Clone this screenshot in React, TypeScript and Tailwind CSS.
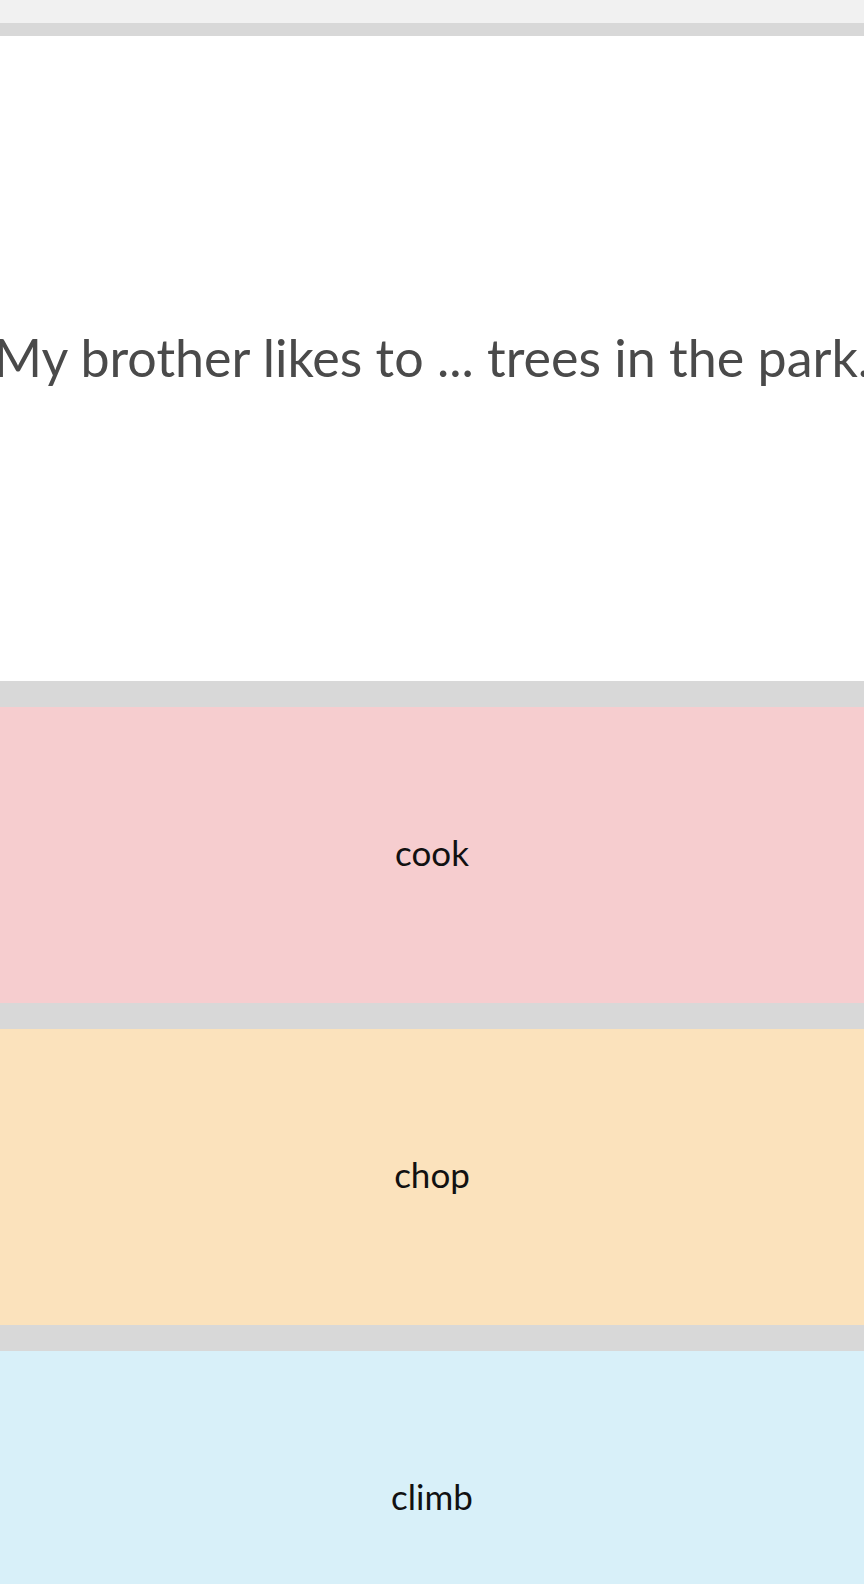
export default function App() {
  const options = [
    { word: "cook", bg: "bg-[#f6cdcf]" },
    { word: "chop", bg: "bg-[#fbe2bc]" },
    { word: "climb", bg: "bg-[#d8f0f9]" },
  ];
  return (
    <div className="h-[1584px] overflow-hidden bg-[#d8d8d8] font-['Lato','Open_Sans',sans-serif]">
      <div className="h-[23px] bg-[#f1f1f1]" />
      <div className="mt-[13px] flex h-[645px] items-center justify-center overflow-hidden bg-white pb-[4px]">
        <p className="whitespace-nowrap text-[52px] text-[#4a4a4a]">My brother likes to ... trees in the park.</p>
      </div>
      <div className="mt-[26px] flex flex-col gap-[26px]">
        {options.map((o) => (
          <div key={o.word} className={`flex h-[296px] items-center justify-center pb-[6px] ${o.bg}`}>
            <span className="text-[35px] text-[#111111]">{o.word}</span>
          </div>
        ))}
      </div>
    </div>
  );
}
